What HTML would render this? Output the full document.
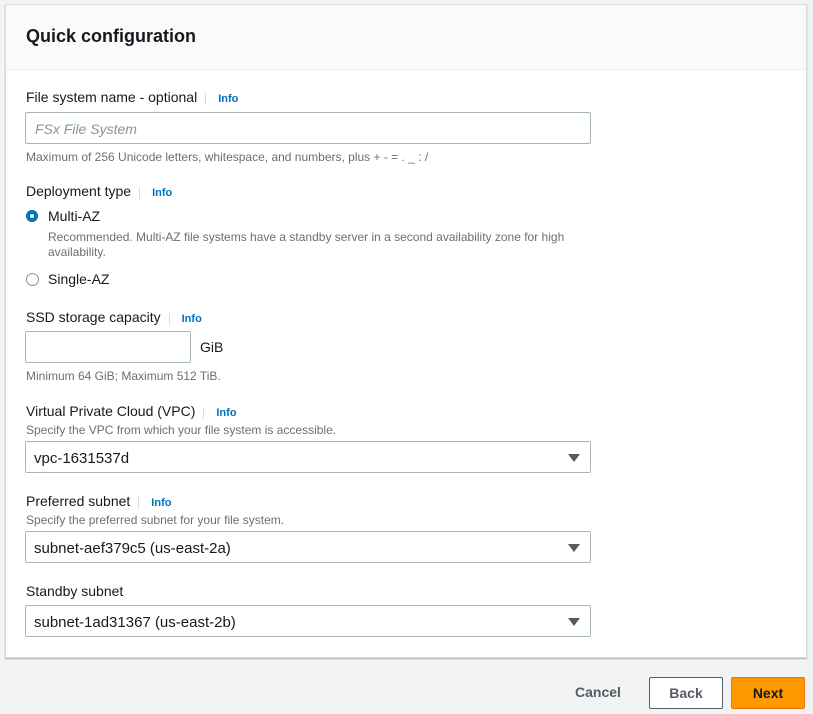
<!DOCTYPE html>
<html><head><style>
body{margin:0;width:813px;height:714px;background:#f2f3f3;font-family:"Liberation Sans",sans-serif;position:relative;overflow:hidden;color:#16191f}
.p{position:absolute;left:5px;top:4px;width:800px;height:652px;background:#fff;border:1px solid #d5dbdb;box-shadow:0 1px 1px rgba(0,28,36,.3)}
.h{position:absolute;left:0;top:0;width:800px;height:64px;background:#fafafa;border-bottom:1px solid #eaeded}
.a{position:absolute;white-space:nowrap}
.t{font-size:18px;font-weight:bold;left:20px;top:21px}
.l{font-size:14px;color:#16191f}
.s{font-size:12px;color:#687078}
.i{font-size:11px;font-weight:bold;color:#0073bb;border-left:1px solid #d5dbdb;padding-left:12px;margin-left:8px}
.in{position:absolute;border:1px solid #aab7b8;border-radius:2px;background:#fff;box-sizing:border-box}
.sel{font-size:15px;padding:8px 8px}
.ar{position:absolute;right:10px;top:12px;width:0;height:0;border-left:6px solid transparent;border-right:6px solid transparent;border-top:8px solid #545b64}
.r{position:absolute;width:12px;height:12px;border-radius:50%;box-sizing:border-box}
.b{position:absolute;top:677px;height:32px;box-sizing:border-box;font-size:14px;font-weight:bold;text-align:center;line-height:30px;border-radius:2px}
</style></head><body>
<div class="p">
<div class="h"></div>
<div class="a t">Quick configuration</div>
<div class="a l" style="left:20px;top:84px">File system name - optional<span class="i">Info</span></div>
<div class="in" style="left:19px;top:107px;width:566px;height:32px;font-size:14px;font-style:italic;color:#879596;padding:8px 9px">FSx File System</div>
<div class="a s" style="left:20px;top:145px">Maximum of 256 Unicode letters, whitespace, and numbers, plus + - = . _ : /</div>
<div class="a l" style="left:20px;top:178px">Deployment type<span class="i">Info</span></div>
<div class="r" style="left:20px;top:205px;border:4px solid #0073bb"></div>
<div class="a l" style="left:42px;top:203px">Multi-AZ</div>
<div class="a s" style="left:42px;top:225px;line-height:15px">Recommended. Multi-AZ file systems have a standby server in a second availability zone for high<br>availability.</div>
<div class="r" style="left:20px;top:268px;border:1px solid #879596;width:13px;height:13px"></div>
<div class="a l" style="left:42px;top:266px">Single-AZ</div>
<div class="a l" style="left:20px;top:304px">SSD storage capacity<span class="i">Info</span></div>
<div class="in" style="left:19px;top:326px;width:166px;height:32px"></div>
<div class="a l" style="left:194px;top:334px">GiB</div>
<div class="a s" style="left:20px;top:364px">Minimum 64 GiB; Maximum 512 TiB.</div>
<div class="a l" style="left:20px;top:398px">Virtual Private Cloud (VPC)<span class="i">Info</span></div>
<div class="a s" style="left:20px;top:418px">Specify the VPC from which your file system is accessible.</div>
<div class="in sel" style="left:19px;top:436px;width:566px;height:32px">vpc-1631537d<div class="ar"></div></div>
<div class="a l" style="left:20px;top:488px">Preferred subnet<span class="i">Info</span></div>
<div class="a s" style="left:20px;top:508px">Specify the preferred subnet for your file system.</div>
<div class="in sel" style="left:19px;top:526px;width:566px;height:32px">subnet-aef379c5 (us-east-2a)<div class="ar"></div></div>
<div class="a l" style="left:20px;top:578px">Standby subnet</div>
<div class="in sel" style="left:19px;top:600px;width:566px;height:32px">subnet-1ad31367 (us-east-2b)<div class="ar"></div></div>
</div>
<div class="b" style="left:566px;width:64px;color:#545b64">Cancel</div>
<div class="b" style="left:649px;width:74px;border:1px solid #545b64;background:#fff;color:#545b64">Back</div>
<div class="b" style="left:731px;width:74px;background:#ff9900;border:1px solid #ec7211;color:#16191f">Next</div>
</body></html>
